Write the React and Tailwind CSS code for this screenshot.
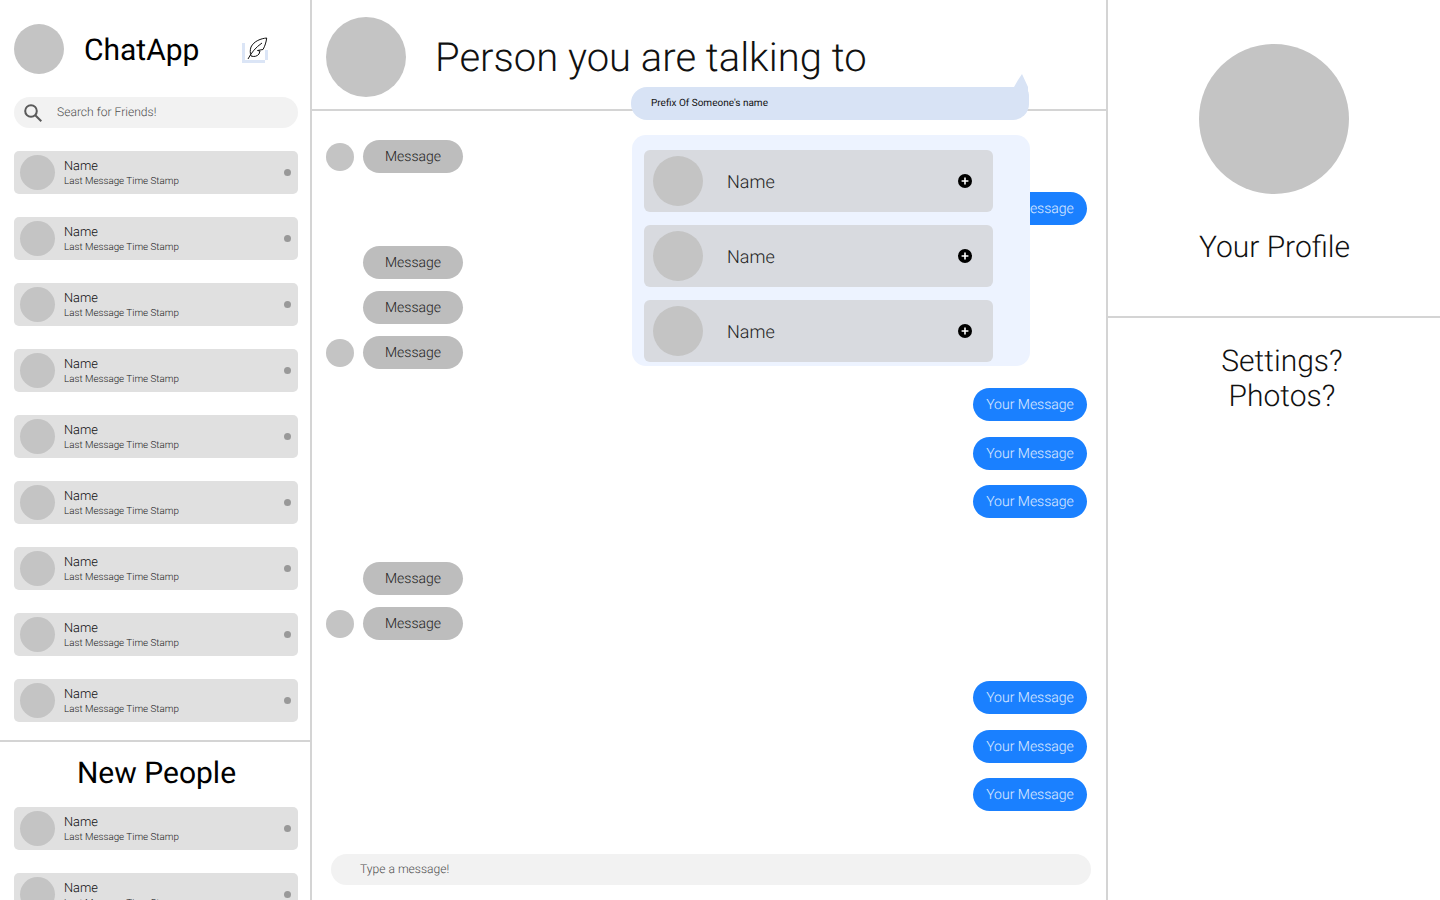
import React from "react";

function Row({ className = "" }) {
  return (
    <div className={`h-[43px] shrink-0 rounded-[5px] bg-[#e0e0e0] flex items-center pl-[6px] pr-[7px] ${className}`}>
      <div className="w-[35px] h-[35px] rounded-full bg-[#c4c4c4] shrink-0" />
      <div className="ml-[9px] flex-1 flex flex-col mt-[2px]">
        <div className="text-[12.8px] leading-[15px] font-light text-[#111]">Name</div>
        <div className="text-[9.8px] leading-[12px] font-light text-[#222] mt-[2px]">Last Message Time Stamp</div>
      </div>
      <div className="w-[7px] h-[7px] rounded-full bg-[#999999]" />
    </div>
  );
}

function Theirs({ avatar, className = "" }) {
  return (
    <div className={`flex items-center h-[33px] ${className}`}>
      <div className={`w-[28px] h-[28px] rounded-full shrink-0 ${avatar ? "bg-[#c4c4c4]" : ""}`} />
      <div className="ml-[9px] w-[100px] h-[33px] rounded-full bg-[#bdbdbd] flex items-center justify-center text-[14px] font-light text-[#222]">
        <span className="mt-[1px]">Message</span>
      </div>
    </div>
  );
}

function Mine({ className = "" }) {
  return (
    <div className={`self-end w-[114px] h-[33px] rounded-full bg-[#1a80ff] flex items-center justify-center text-[14px] font-light text-white/85 ${className}`}>
      <span className="mt-[1px]">Your Message</span>
    </div>
  );
}

function PersonRow({ className = "" }) {
  return (
    <div className={`h-[62px] w-[349px] rounded-[6px] bg-[#d8dadf] flex items-center pl-[9px] pr-[21px] ${className}`}>
      <div className="w-[50px] h-[50px] rounded-full bg-[#c4c4c4] shrink-0" />
      <div className="ml-[24px] mt-[2px] flex-1 text-[18px] font-light text-[#222]">Name</div>
      <svg width="14" height="14" viewBox="0 0 14 14">
        <circle cx="7" cy="7" r="7" fill="#000" />
        <path d="M7 3.6v6.8M3.6 7h6.8" stroke="#fff" strokeWidth="1.6" />
      </svg>
    </div>
  );
}

export default function App() {
  return (
    <div className="relative w-[1440px] h-[900px] overflow-hidden bg-white flex font-['Roboto',sans-serif] [text-rendering:geometricPrecision]">
      <aside className="w-[312px] h-full shrink-0 border-r-2 border-[#d4d4d4] flex flex-col overflow-hidden">
        <div className="h-[97px] shrink-0 flex items-start pt-[24px] pl-[14px]">
          <div className="w-[50px] h-[50px] rounded-full bg-[#c4c4c4] shrink-0" />
          <div className="ml-[20px] mt-[9px] w-[115px] text-[30px] leading-[36px] text-black">ChatApp</div>
          <svg className="ml-[43px] mt-[12px]" width="28" height="29" viewBox="0 0 28 29" fill="none">
            <path d="M1.5 7v18.5H23M24.5 14v10" stroke="#dbe5f6" strokeWidth="3" />
            <path d="M24.7 2C19 2.5 12 5 9 11C8 14 8 17 9 20C12 21 15 20.5 17 18L18 15L15.5 14.5L21 13.5C23 10 24.2 6 24.7 2ZM6 23C9 17 14 11 20 7" stroke="#111" strokeWidth="1" strokeLinejoin="round" />
          </svg>
        </div>
        <div className="ml-[14px] mr-[12px] h-[31px] shrink-0 rounded-full bg-[#f2f2f2] flex items-center pl-[9px]">
          <svg width="20" height="20" viewBox="0 0 20 20" fill="none" stroke="#5a5a5a" strokeWidth="2">
            <circle cx="8" cy="8" r="5.8" />
            <path d="M12.3 12.3l6 6" />
          </svg>
          <span className="ml-[14px] mt-[-1px] text-[12.1px] font-light text-[#4f4f4f]">Search for Friends!</span>
        </div>
        <div className="mt-[23px] ml-[14px] mr-[12px] flex flex-col gap-[23px] shrink-0">
          {Array.from({ length: 9 }).map((_, i) => <Row key={i} />)}
        </div>
        <div className="mt-[18px] h-[2px] shrink-0 bg-[#d4d4d4]" />
        <div className="h-[65px] shrink-0 flex items-center justify-center pb-[3px] pl-[3px] text-[30px] text-black">New People</div>
        <div className="ml-[14px] mr-[12px] flex flex-col gap-[23px] shrink-0">
          <Row />
          <Row />
        </div>
      </aside>

      <main className="w-[796px] h-full shrink-0 border-r-2 border-[#d4d4d4] flex flex-col">
        <div className="h-[111px] shrink-0 border-b-2 border-[#d4d4d4] flex items-start pt-[17px] pl-[14px]">
          <div className="w-[80px] h-[80px] rounded-full bg-[#c4c4c4] shrink-0" />
          <div className="ml-[29px] mt-[16px] text-[40px] leading-[50px] font-light text-[#111]">Person you are talking to</div>
        </div>
        <div className="flex-1 relative flex flex-col pl-[14px] pr-[19px] pt-[29px]">
          <Theirs avatar />
          <Mine className="mt-[19px]" />
          <Theirs className="mt-[21px]" />
          <Theirs className="mt-[12px]" />
          <Theirs avatar className="mt-[12px]" />
          <Mine className="mt-[19px]" />
          <Mine className="mt-[16px]" />
          <Mine className="mt-[15px]" />
          <Theirs className="mt-[44px]" />
          <Theirs avatar className="mt-[12px]" />
          <Mine className="mt-[41px]" />
          <Mine className="mt-[16px]" />
          <Mine className="mt-[15px]" />
          <div className="mt-[43px] ml-[5px] mr-[-4px] h-[31px] rounded-full bg-[#f2f2f2] flex items-center pl-[29px] text-[12.1px] font-light text-[#4f4f4f]">
            <span className="mt-[-1px]">Type a message!</span>
          </div>
        </div>
      </main>

      <aside className="flex-1 h-full flex flex-col">
        <div className="h-[318px] shrink-0 border-b-2 border-[#d4d4d4] flex flex-col items-center pt-[44px]">
          <div className="w-[150px] h-[150px] rounded-full bg-[#c4c4c4] ml-[-1px]" />
          <div className="mt-[34px] ml-[1px] text-[30px] leading-[40px] font-light text-[#111]">Your Profile</div>
        </div>
        <div className="pt-[26px] pl-[16px] text-center text-[30px] leading-[35px] font-light text-[#111]">
          <div>Settings?</div>
          <div>Photos?</div>
        </div>
      </aside>

      <div className="absolute left-[631px] top-[74px] w-[398px] h-[46px]">
        <svg className="absolute right-0 top-0" width="16" height="20" viewBox="0 0 16 20">
          <path d="M0 13.5L1 13 5 6 9 0 l6 13v7H0z" fill="#d8e3f5" />
        </svg>
        <div className="absolute left-0 right-0 bottom-0 h-[33px] rounded-[16px] rounded-tr-[8px] bg-[#d8e3f5] flex items-center pl-[20px] text-[10px] text-[#111]">
          <span className="mt-[-1px]">Prefix Of Someone's name</span>
        </div>
      </div>
      <div className="absolute left-[632px] top-[135px] w-[398px] h-[231px] rounded-[14px] bg-[#edf3ff] pt-[15px] pl-[12px] flex flex-col gap-[13px]">
        <PersonRow />
        <PersonRow />
        <PersonRow />
      </div>
    </div>
  );
}
